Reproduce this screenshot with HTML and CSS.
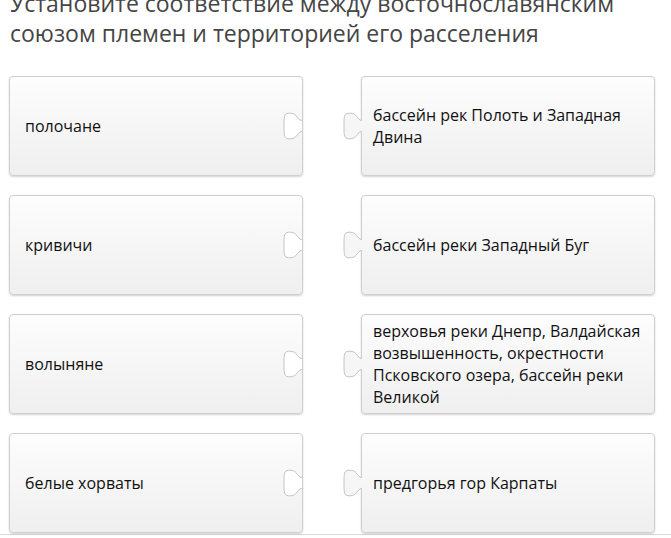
FILE: index.html
```html
<!DOCTYPE html>
<html lang="ru">
<head>
<meta charset="utf-8">
<link rel="stylesheet" href="styles.css">
</head>
<body>
<h1 class="title">Установите соответствие между восточнославянским союзом племен и территорией его расселения</h1>
<div class="board">
  <div class="card left"><span>полочане</span>
    <svg class="notch" width="20" height="28" viewBox="0 0 20 28"><path d="M19,8.5 C16,8.5 15,6 13.5,4 C11.5,1.5 7,0.5 4,1.5 C1,2.5 1,6 1,14 C1,22 1,25.5 4,26.5 C7,27.5 11.5,26.5 13.5,24 C15,22 16,19.5 19,19.5"/></svg>
  </div>
  <div class="card right"><span>бассейн рек Полоть и Западная Двина</span>
    <svg class="tab" width="20" height="28" viewBox="0 0 20 28"><path d="M19,8.5 C16,8.5 15,6 13.5,4 C11.5,1.5 7,0.5 4,1.5 C1,2.5 1,6 1,14 C1,22 1,25.5 4,26.5 C7,27.5 11.5,26.5 13.5,24 C15,22 16,19.5 19,19.5"/></svg>
  </div>
  <div class="card left"><span>кривичи</span>
    <svg class="notch" width="20" height="28" viewBox="0 0 20 28"><path d="M19,8.5 C16,8.5 15,6 13.5,4 C11.5,1.5 7,0.5 4,1.5 C1,2.5 1,6 1,14 C1,22 1,25.5 4,26.5 C7,27.5 11.5,26.5 13.5,24 C15,22 16,19.5 19,19.5"/></svg>
  </div>
  <div class="card right"><span>бассейн реки Западный Буг</span>
    <svg class="tab" width="20" height="28" viewBox="0 0 20 28"><path d="M19,8.5 C16,8.5 15,6 13.5,4 C11.5,1.5 7,0.5 4,1.5 C1,2.5 1,6 1,14 C1,22 1,25.5 4,26.5 C7,27.5 11.5,26.5 13.5,24 C15,22 16,19.5 19,19.5"/></svg>
  </div>
  <div class="card left"><span>волыняне</span>
    <svg class="notch" width="20" height="28" viewBox="0 0 20 28"><path d="M19,8.5 C16,8.5 15,6 13.5,4 C11.5,1.5 7,0.5 4,1.5 C1,2.5 1,6 1,14 C1,22 1,25.5 4,26.5 C7,27.5 11.5,26.5 13.5,24 C15,22 16,19.5 19,19.5"/></svg>
  </div>
  <div class="card right"><span>верховья реки Днепр, Валдайская возвышенность, окрестности Псковского озера, бассейн реки Великой</span>
    <svg class="tab" width="20" height="28" viewBox="0 0 20 28"><path d="M19,8.5 C16,8.5 15,6 13.5,4 C11.5,1.5 7,0.5 4,1.5 C1,2.5 1,6 1,14 C1,22 1,25.5 4,26.5 C7,27.5 11.5,26.5 13.5,24 C15,22 16,19.5 19,19.5"/></svg>
  </div>
  <div class="card left"><span>белые хорваты</span>
    <svg class="notch" width="20" height="28" viewBox="0 0 20 28"><path d="M19,8.5 C16,8.5 15,6 13.5,4 C11.5,1.5 7,0.5 4,1.5 C1,2.5 1,6 1,14 C1,22 1,25.5 4,26.5 C7,27.5 11.5,26.5 13.5,24 C15,22 16,19.5 19,19.5"/></svg>
  </div>
  <div class="card right"><span>предгорья гор Карпаты</span>
    <svg class="tab" width="20" height="28" viewBox="0 0 20 28"><path d="M19,8.5 C16,8.5 15,6 13.5,4 C11.5,1.5 7,0.5 4,1.5 C1,2.5 1,6 1,14 C1,22 1,25.5 4,26.5 C7,27.5 11.5,26.5 13.5,24 C15,22 16,19.5 19,19.5"/></svg>
  </div>
</div>
<div class="rule"></div>
</body>
</html>
```
FILE: styles.css
```css
html, body {
  margin: 0;
  padding: 0;
  background: #ffffff;
  overflow: hidden;
}
body {
  font-family: "Open Sans", "Liberation Sans", sans-serif;
  width: 671px;
  height: 538px;
}
.title {
  margin: -12px 0 0 0;
  padding: 0 20px 0 10px;
  font-size: 23px;
  line-height: 30px;
  font-weight: 400;
  color: #454545;
}
.board {
  display: grid;
  grid-template-columns: 294px 294px;
  grid-auto-rows: 100px;
  column-gap: 58px;
  row-gap: 19px;
  padding-left: 9px;
  margin-top: 28px;
}
.card {
  position: relative;
  box-sizing: border-box;
  border: 1px solid #cfcfcf;
  border-radius: 4px;
  background: linear-gradient(#fdfdfd, #efefef);
  box-shadow: 0 1px 2px rgba(0, 0, 0, 0.18);
  display: flex;
  align-items: center;
  font-size: 16px;
  line-height: 22px;
  color: #111;
}
.card.left {
  padding: 0 24px 0 15px;
}
.card.right {
  padding: 0 4px 0 11px;
}
.card svg {
  position: absolute;
  top: 35px;
  overflow: visible;
}
.card svg path {
  stroke: #c4c4c4;
  stroke-width: 1;
}
.notch {
  right: -1px;
}
.notch path {
  fill: #ffffff;
}
.tab {
  left: -19px;
}
.tab path {
  fill: #f6f6f6;
}
.rule {
  margin-top: 1px;
  height: 1px;
  background: #dcdcdc;
}
```
